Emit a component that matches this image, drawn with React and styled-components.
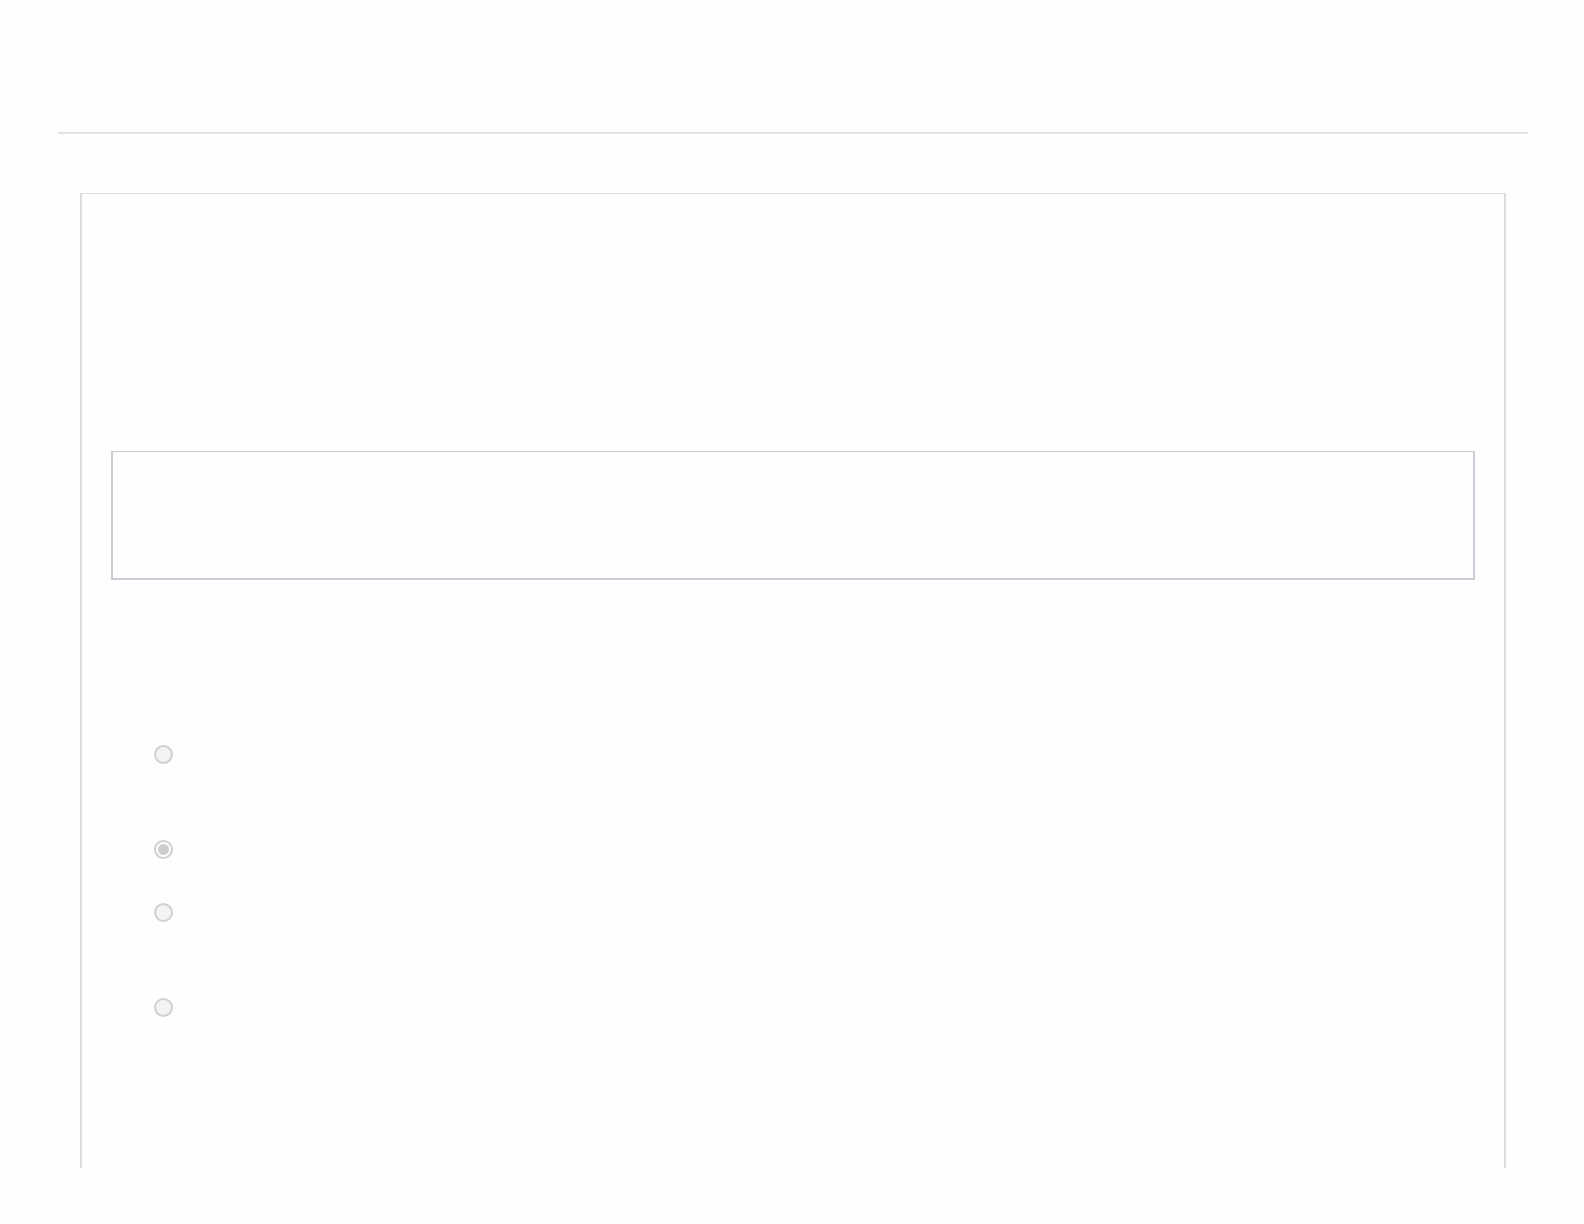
import React from 'react'
import styled, { createGlobalStyle } from 'styled-components'

const GlobalStyle = createGlobalStyle`
  html, body {
    margin: 0;
    padding: 0;
    background: #fefefe;
    font-family: "Liberation Sans", Arial, sans-serif;
  }
`

const options = [
  { id: 'a', height: 95, checked: false },
  { id: 'b', height: 63, checked: true },
  { id: 'c', height: 95, checked: false },
  { id: 'd', height: 40, checked: false }
]

const App = () => (
  <Page>
    <GlobalStyle />
    <Header />
    <Rule />
    <Panel>
      <Intro />
      <AnswerBox aria-label="answer" />
      <Choices>
        {options.map(({ id, height, checked }) => (
          <Choice key={id} height={height}>
            <Radio checked={checked} />
          </Choice>
        ))}
      </Choices>
    </Panel>
  </Page>
)

const Page = styled.div`
  display: flex;
  flex-direction: column;
  padding: 0 56px 0 58px;
  min-height: 1224px;
  box-sizing: border-box;
`
const Header = styled.header`
  height: 132px;
`
const Rule = styled.hr`
  margin: 0;
  border: none;
  height: 2px;
  background: #e5e1e3;
`
const Panel = styled.section`
  margin: 59px 22px 0;
  height: 975px;
  box-sizing: border-box;
  border: 2px solid #dddddd;
  border-top-width: 1px;
  border-bottom: none;
  display: flex;
  flex-direction: column;
  padding: 0 29px;
`
const Intro = styled.div`
  height: 257px;
`
const AnswerBox = styled.div`
  height: 129px;
  box-sizing: border-box;
  border: 2px solid #c9cdd5;
  border-top-width: 1px;
  background: #fefefe;
`
const Choices = styled.div`
  display: flex;
  flex-direction: column;
  margin-top: 165px;
  padding-left: 43px;
`
const Choice = styled.div`
  height: ${({ height }) => height}px;
  display: flex;
  align-items: flex-start;
`
const Radio = styled.span`
  width: 19px;
  height: 19px;
  box-sizing: border-box;
  border-radius: 50%;
  border: 2px solid #d0d0d0;
  background: ${({ checked }) => (checked ? '#ffffff' : '#f3f3f3')};
  display: flex;
  align-items: center;
  justify-content: center;
  &::after {
    content: '';
    display: ${({ checked }) => (checked ? 'block' : 'none')};
    width: 11px;
    height: 11px;
    border-radius: 50%;
    background: #cdcdcd;
  }
`

export default App
